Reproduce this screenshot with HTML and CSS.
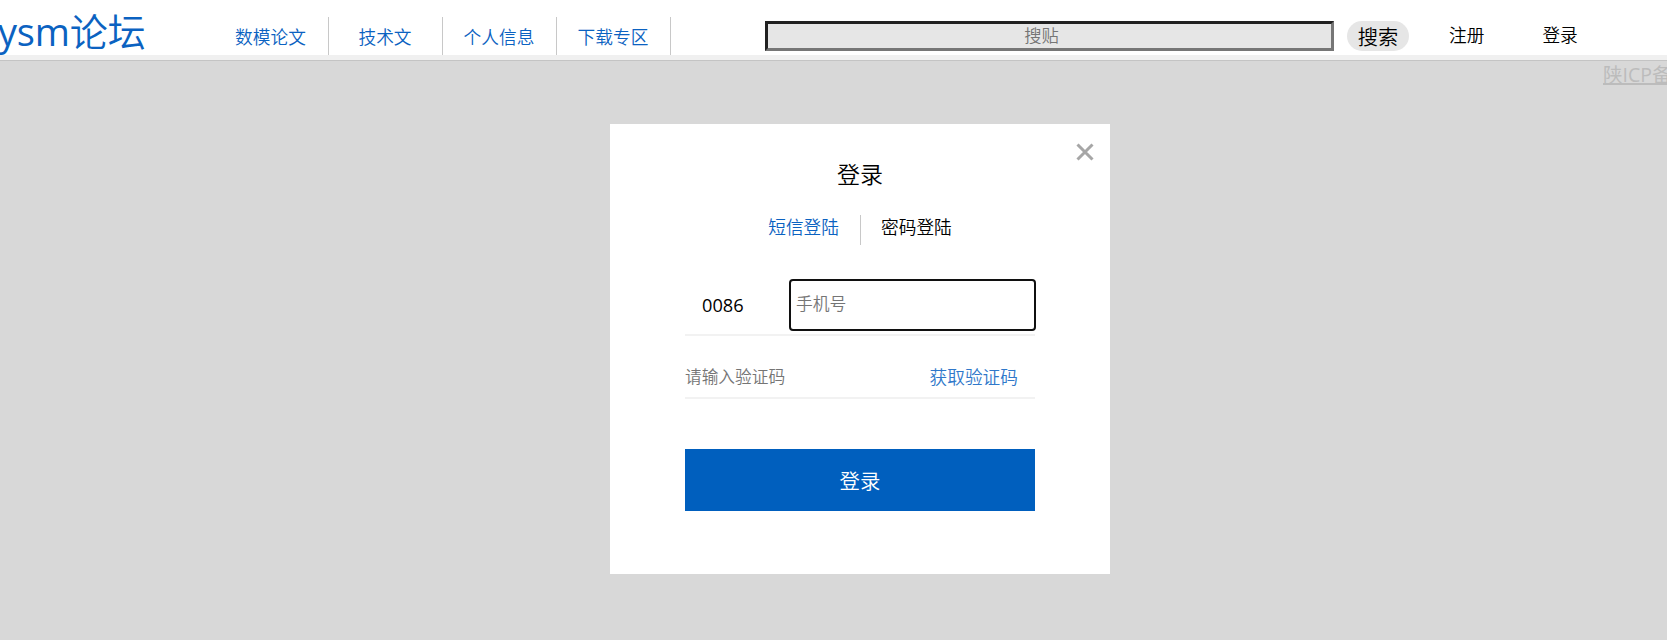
FILE: index.html
```html
<!DOCTYPE html>
<html lang="zh-CN">
<head>
<meta charset="utf-8">
<title>ysm论坛</title>
<link rel="stylesheet" href="styles.css">
</head>
<body>
<header class="header">
  <a class="logo"><span class="logo-latin">ysm</span>论坛</a>
  <nav class="nav">
    <a class="nav-item">数模论文</a>
    <a class="nav-item">技术文</a>
    <a class="nav-item">个人信息</a>
    <a class="nav-item">下载专区</a>
  </nav>
  <form class="search">
    <input class="search-input" type="text" placeholder="搜贴">
    <button class="search-button" type="button">搜索</button>
  </form>
  <a class="account register">注册</a>
  <a class="account">登录</a>
</header>
<main class="page">
  <a class="record">陕ICP备</a>
  <section class="dialog">
    <svg class="close" viewBox="0 0 18 18"><path d="M1.5 1.5 16.5 16.5M16.5 1.5 1.5 16.5"/></svg>
    <h1 class="title">登录</h1>
    <div class="tabs">
      <a class="tab active">短信登陆</a>
      <a class="tab">密码登陆</a>
    </div>
    <div class="row phone-row">
      <span class="area-code">0086</span>
      <input class="phone" type="text" placeholder="手机号">
    </div>
    <div class="row code-row">
      <input class="code" type="text" placeholder="请输入验证码">
      <a class="get-code">获取验证码</a>
    </div>
    <button class="submit" type="button">登录</button>
  </section>
</main>
</body>
</html>
```
FILE: styles.css
```css
* { box-sizing: border-box; }
body {
  margin: 0;
  height: 640px;
  overflow: hidden;
  background: #d8d8d8;
  color: #000;
  font-family: "Open Sans", "Noto Sans CJK SC", sans-serif;
  font-size: 17.7px;
  font-weight: 350;
}
input, button { font-family: inherit; font-weight: inherit; border: 0; padding: 0; margin: 0; }
.header {
  display: flex;
  align-items: flex-start;
  height: 61px;
  background: #fff;
  border-bottom: 1px solid #c4c4c4;
  box-shadow: inset 0 -5px #f0f0f0;
  white-space: nowrap;
}
.logo {
  width: 215px;
  margin-left: -2px;
  font-size: 38px;
  line-height: 63px;
  color: #0b62c1;
}
.logo-latin { font-weight: 400; letter-spacing: -0.2px; }
.nav { display: flex; padding-top: 17px; }
.nav-item {
  width: 114px;
  height: 38px;
  line-height: 40px;
  padding-right: 1px;
  text-align: center;
  color: #0b62c1;
  border-right: 1px solid #c8c8c8;
}
.nav-item:first-child { width: 116px; padding: 0; }
.search { display: flex; gap: 13px; padding: 21px 0 0 94px; }
.search-input {
  width: 569px;
  height: 30px;
  border: 3px solid #767676;
  border-color: #212121 #767676 #767676 #212121;
  background: #e6e6e6;
  padding: 0 16px 2px 0;
  text-align: center;
  font-size: 17.3px;
}
::placeholder { color: #757575; opacity: 1; }
.search-button {
  width: 62px;
  height: 30px;
  padding-top: 2px;
  border-radius: 15px;
  background: #e6e6e6;
  color: #000;
  font-size: 20.2px;
  line-height: 28px;
}
.account { padding-top: 17px; line-height: 37px; margin-left: 58px; }
.register { margin-left: 40px; }
.page { display: flex; flex-direction: column; align-items: center; }
.record {
  align-self: flex-end;
  width: 64px;
  height: 63px;
  white-space: nowrap;
  font-size: 19.5px;
  font-weight: 400;
  line-height: 28px;
  color: #bcbcbc;
  text-decoration: underline;
  text-decoration-thickness: 2px;
}
.dialog {
  position: relative;
  display: flex;
  flex-direction: column;
  width: 500px;
  height: 450px;
  margin-left: 53px;
  padding: 0 75px;
  background: #fff;
}
.close {
  position: absolute;
  top: 19px;
  right: 16.5px;
  width: 18px;
  height: 18px;
  fill: none;
  stroke: #a6a6a6;
  stroke-width: 3;
}
.title {
  margin: 35px 0 0;
  text-align: center;
  font-size: 23px;
  font-weight: inherit;
  line-height: 30px;
}
.tabs { display: flex; justify-content: center; margin-top: 26px; }
.tab { padding: 0 20px; line-height: 24px; height: 30px; }
.active { color: #0b62c1; border-right: 1px solid #c8c8c8; padding-right: 21px; }
.row { display: flex; flex: none; justify-content: space-between; border-bottom: 2px solid #f2f2f2; }
.phone-row { height: 58px; margin-top: 33px; }
.area-code { padding-left: 17px; font-size: 18.2px; font-weight: 400; line-height: 54px; }
.phone {
  width: 247px;
  height: 52px;
  margin: 1px -1px 0 0;
  padding: 0 5px 3px;
  border: 2px solid #101010;
  border-radius: 4px;
  font-size: 16.8px;
}
.code-row { height: 63px; }
.code { width: 200px; height: 40px; margin-top: 20px; font-size: 16.7px; background: transparent; }
.get-code { padding: 21px 17px 0 0; line-height: 40px; height: 61px; color: #2f78ca; }
.submit {
  height: 62px;
  margin-top: 50px;
  padding-top: 2px;
  background: #005fbe;
  color: #fff;
  font-size: 20.4px;
  line-height: 60px;
}
```
